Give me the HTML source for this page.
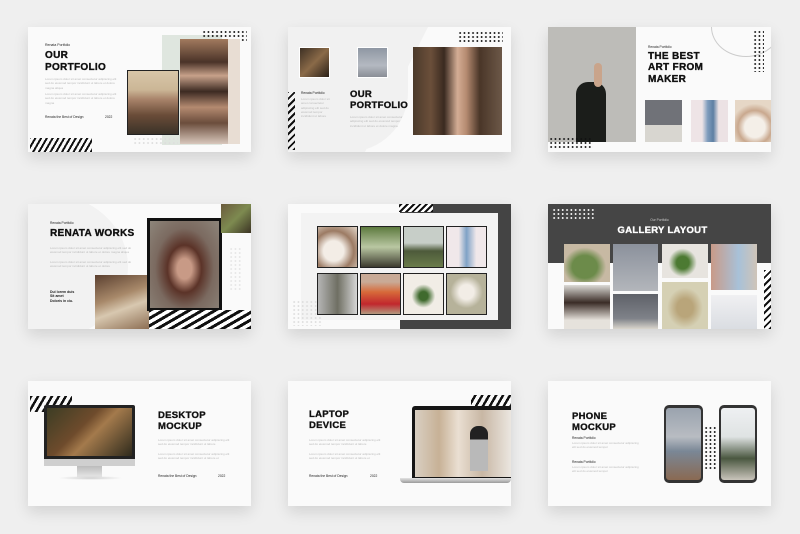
<!DOCTYPE html>
<html><head><meta charset="utf-8"><style>
*{margin:0;padding:0;box-sizing:border-box}
body{width:800px;height:534px;background:#efefef;position:relative;overflow:hidden;font-family:"Liberation Sans",sans-serif}
.s{position:absolute;width:223px;height:125px;background:#fafafa;box-shadow:0 6px 14px rgba(0,0,0,.12);overflow:hidden}
.a{position:absolute}
.t{position:absolute;font-weight:bold;color:#111;font-size:10.5px;line-height:11.5px;letter-spacing:.3px;-webkit-text-stroke:0.35px currentColor}
.sm{position:absolute;font-size:4px;color:#222;white-space:nowrap}
.lo{position:absolute;font-size:3px;line-height:4.3px;color:#bbb;width:75px;overflow:hidden}
.st{position:absolute;background:repeating-linear-gradient(-60deg,#111 0 2px,transparent 2px 5px)}
.dk{position:absolute;background-image:radial-gradient(#111 0.8px,transparent 1.1px);background-size:4.3px 4px}
.dw{position:absolute;background-image:radial-gradient(#fff 0.8px,transparent 1.1px);background-size:4.3px 4px}
.dl{position:absolute;background-image:radial-gradient(#ddd 0.8px,transparent 1.1px);background-size:4.3px 4px}
.p{position:absolute}
.bk{border:1.5px solid #222}
</style></head><body>

<!-- Slide 1 -->
<div class="s" style="left:28px;top:27px">
 <div class="sm" style="left:17px;top:16px;font-size:3.5px">Renata Portfolio</div>
 <div class="t" style="left:17px;top:23px;font-size:10px">OUR<br>PORTFOLIO</div>
 <div class="lo" style="left:17px;top:50px">Lorem ipsum dolor sit amet consectetur adipiscing elit sed do eiusmod tempor incididunt ut labore et dolore magna aliqua</div>
 <div class="lo" style="left:17px;top:65px">Lorem ipsum dolor sit amet consectetur adipiscing elit sed do eiusmod tempor incididunt ut labore et dolore magna</div>
 <div class="sm" style="left:17px;top:88px;font-size:3.3px">Renata the Best of Design</div>
 <div class="sm" style="left:77px;top:88px;font-size:3.3px">2022</div>
 <div class="a" style="left:134px;top:8px;width:60px;height:110px;background:#dfe6df"></div>
 <div class="dk" style="left:174px;top:3px;width:45px;height:13px"></div>
 <div class="p" style="left:152px;top:12px;width:60px;height:105px;background:linear-gradient(180deg,#a27a5e 0%,#4a3328 22%,#c7a18a 35%,#3c2a22 50%,#b48a70 65%,#6b4d3c 80%,#d8c7bc 100%)"></div>
 <div class="p" style="left:200px;top:12px;width:12px;height:105px;background:#e8ddd3"></div>
 <div class="p bk" style="left:99px;top:43px;width:52px;height:65px;background:linear-gradient(180deg,#d8c6a8 0%,#cbb696 30%,#a8836a 45%,#6a4c38 70%,#3a3228 100%)"></div>
 <div class="dl" style="left:105px;top:110px;width:45px;height:8px"></div>
 <div class="st" style="left:2px;top:111px;width:62px;height:14px"></div>
</div>

<!-- Slide 2 -->
<div class="s" style="left:288px;top:27px">
 <div class="a" style="left:0;top:0;width:120px;height:125px;background:#f1f1f1;border-radius:0 0 60px 0"></div>
 <div class="a" style="left:50px;top:0;width:90px;height:125px;background:#f1f1f1;clip-path:polygon(60% 0,100% 0,30% 100%,0 100%)"></div>
 <div class="dk" style="left:170px;top:4px;width:45px;height:13px"></div>
 <div class="p" style="left:11px;top:20px;width:31px;height:31px;background:linear-gradient(135deg,#3d3024,#8a6a48,#2a2018);border:1px solid #fff"></div>
 <div class="p" style="left:69px;top:20px;width:31px;height:31px;background:linear-gradient(180deg,#8f97a3,#b4b9c1 60%,#8a8e96);border:1px solid #fff"></div>
 <div class="p" style="left:125px;top:20px;width:89px;height:88px;background:linear-gradient(90deg,#4b3a2b 0%,#6b4f3a 20%,#3a2a20 35%,#d4ad95 50%,#b58a70 60%,#4a3628 75%,#6c5848 100%)"></div>
 <div class="st" style="left:0;top:65px;width:7px;height:58px;background:repeating-linear-gradient(-45deg,#111 0 2px,transparent 2px 5px)"></div>
 <div class="sm" style="left:13px;top:64px;font-size:3.3px">Renata Portfolio</div>
 <div class="lo" style="left:13px;top:70px;width:34px">Lorem ipsum dolor sit amet consectetur adipiscing elit sed do eiusmod tempor incididunt ut labore</div>
 <div class="t" style="left:62px;top:62px;font-size:9.5px;line-height:11px">OUR<br>PORTFOLIO</div>
 <div class="lo" style="left:62px;top:88px;width:55px">Lorem ipsum dolor sit amet consectetur adipiscing elit sed do eiusmod tempor incididunt ut labore et dolore magna</div>
</div>

<!-- Slide 3 -->
<div class="s" style="left:548px;top:27px">
 <div class="p" style="left:0;top:0;width:88px;height:115px;background:#bdbcb8"></div>
 <div class="p" style="left:28px;top:55px;width:30px;height:60px;background:#1b1d1a;border-radius:12px 12px 0 0"></div>
 <div class="p" style="left:46px;top:36px;width:8px;height:24px;background:#c9a48b;border-radius:4px"></div>
 <div class="dk" style="left:1px;top:110px;width:44px;height:11px"></div>
 <div class="a" style="left:163px;top:-30px;width:70px;height:60px;border:1px solid #ccc;border-radius:50%"></div>
 <div class="dk" style="left:205px;top:3px;width:11px;height:42px"></div>
 <div class="sm" style="left:100px;top:18px;font-size:3.3px">Renata Portfolio</div>
 <div class="t" style="left:100px;top:24px;font-size:10px;line-height:11.3px">THE BEST<br>ART FROM<br>MAKER</div>
 <div class="p" style="left:97px;top:73px;width:37px;height:42px;background:linear-gradient(180deg,#707278 0 60%,#d8d6d0 60%)"></div>
 <div class="p" style="left:143px;top:73px;width:37px;height:42px;background:linear-gradient(90deg,#eee4e6 30%,#7f9dbd 45%,#5d7fa3 60%,#ece2e4 75%)"></div>
 <div class="p" style="left:187px;top:73px;width:36px;height:42px;background:radial-gradient(circle at 55% 65%,#f4efe8 30%,#c9a88e 50%,#e6d7c6 70%)"></div>
</div>

<!-- Slide 4 -->
<div class="s" style="left:28px;top:204px">
 <div class="a" style="left:-60px;top:-10px;width:160px;height:145px;background:#f2f2f2;border-radius:50%"></div>
 <div class="sm" style="left:22px;top:17px;font-size:3.3px">Renata Portfolio</div>
 <div class="t" style="left:22px;top:24px;font-size:10px">RENATA WORKS</div>
 <div class="lo" style="left:22px;top:42px;width:85px">Lorem ipsum dolor sit amet consectetur adipiscing elit sed do eiusmod tempor incididunt ut labore et dolore magna aliqua</div>
 <div class="lo" style="left:22px;top:56px;width:85px">Lorem ipsum dolor sit amet consectetur adipiscing elit sed do eiusmod tempor incididunt ut labore et dolore</div>
 <div class="sm" style="left:22px;top:86px;font-size:3.5px;line-height:4.3px;font-weight:bold">Dui lorem duis<br>Sit amet<br>Doloris in ciu.</div>
 <div class="p" style="left:67px;top:71px;width:55px;height:54px;background:linear-gradient(160deg,#5b4030,#a8896a 40%,#d8c8b0 60%,#8c6d52)"></div>
 <div class="p" style="left:119px;top:14px;width:75px;height:93px;background:#111"></div>
 <div class="p" style="left:122px;top:17px;width:69px;height:87px;background:radial-gradient(ellipse at 50% 55%,#c89a86 15%,#5b3328 35%,#7b6a60 60%,#8d857a)"></div>
 <div class="p" style="left:193px;top:0;width:30px;height:29px;background:linear-gradient(135deg,#6a5a3c,#7d8a50,#3c3424)"></div>
 <div class="dw" style="left:201px;top:43px;width:14px;height:45px;background-image:radial-gradient(#e6e6e6 0.8px,transparent 1.1px)"></div>
 <div class="a" style="left:121px;top:106px;width:102px;height:19px;background:repeating-linear-gradient(-30deg,#111 0 3px,#fff 3px 6.5px)"></div>
</div>

<!-- Slide 5 -->
<div class="s" style="left:288px;top:204px">
 <div class="a" style="left:112px;top:0;width:111px;height:125px;background:#444"></div>
 <div class="a" style="left:13px;top:9px;width:197px;height:107px;background:#f3f3f3"></div>
 <div class="a" style="left:0;top:116px;width:112px;height:9px;background:#fafafa"></div>
 <div class="st" style="left:111px;top:0;width:34px;height:8px;background:repeating-linear-gradient(-45deg,#111 0 2px,#fff 2px 4.5px)"></div>
 <div class="dl" style="left:4px;top:96px;width:30px;height:26px"></div>
 <div class="p bk" style="left:29px;top:22px;width:41px;height:42px;background:radial-gradient(circle at 40% 60%,#f3ede6 30%,#9c7b64 60%,#e2d6c9)"></div>
 <div class="p bk" style="left:72px;top:22px;width:41px;height:42px;background:linear-gradient(180deg,#5d7a3e,#b9c7a2 50%,#3c3a2e)"></div>
 <div class="p bk" style="left:115px;top:22px;width:41px;height:42px;background:linear-gradient(180deg,#c7cec8 40%,#4d5a3a 60%,#6a7c4a)"></div>
 <div class="p bk" style="left:158px;top:22px;width:41px;height:42px;background:linear-gradient(90deg,#f0e8ea 30%,#7fa2c6 50%,#f0e8ea 75%)"></div>
 <div class="p bk" style="left:29px;top:69px;width:41px;height:42px;background:linear-gradient(90deg,#b5b5b5,#6f6f63 50%,#d6d6d6)"></div>
 <div class="p bk" style="left:72px;top:69px;width:41px;height:42px;background:linear-gradient(180deg,#c9aa96 20%,#d76a3a 45%,#c1272d 75%,#b2997f)"></div>
 <div class="p bk" style="left:115px;top:69px;width:41px;height:42px;background:radial-gradient(circle at 50% 55%,#3f6a2e 15%,#f1ede6 40%)"></div>
 <div class="p bk" style="left:158px;top:69px;width:41px;height:42px;background:radial-gradient(circle at 50% 45%,#f2ede6 25%,#b6b29a 55%)"></div>
</div>

<!-- Slide 6 -->
<div class="s" style="left:548px;top:204px">
 <div class="a" style="left:0;top:0;width:223px;height:59px;background:#454545"></div>
 <div class="dw" style="left:4px;top:4px;width:44px;height:13px"></div>
 <div class="sm" style="left:0;width:223px;text-align:center;top:14px;font-size:3.3px;color:#ccc">Our Portfolio</div>
 <div class="t" style="left:0;width:229px;text-align:center;top:21px;color:#fff;font-size:9.5px">GALLERY LAYOUT</div>
 <div class="p" style="left:16px;top:40px;width:46px;height:38px;background:radial-gradient(ellipse at 45% 60%,#6c8b4a 35%,#c7b9a3 60%)"></div>
 <div class="p" style="left:16px;top:81px;width:46px;height:44px;background:linear-gradient(180deg,#dcdad6,#3a2c26 40%,#e6e2dc 80%)"></div>
 <div class="p" style="left:65px;top:40px;width:45px;height:47px;background:linear-gradient(180deg,#8b919c,#b3b6bb)"></div>
 <div class="p" style="left:65px;top:90px;width:45px;height:35px;background:linear-gradient(180deg,#5e6168,#7f8289 70%,#d9d5cc)"></div>
 <div class="p" style="left:114px;top:40px;width:46px;height:34px;background:radial-gradient(circle at 45% 55%,#4c7a32 20%,#e7e4df 45%)"></div>
 <div class="p" style="left:114px;top:78px;width:46px;height:47px;background:radial-gradient(ellipse at 50% 55%,#b9a57a 25%,#d5d0b4 55%)"></div>
 <div class="p" style="left:163px;top:40px;width:46px;height:46px;background:linear-gradient(90deg,#c99a88,#a8c1d8 60%,#cfc4b8)"></div>
 <div class="p" style="left:163px;top:91px;width:46px;height:34px;background:linear-gradient(180deg,#f0f0f2,#dadde2)"></div>
 <div class="st" style="left:216px;top:66px;width:7px;height:59px;background:repeating-linear-gradient(-45deg,#111 0 2px,#fff 2px 5px)"></div>
</div>

<!-- Slide 7 -->
<div class="s" style="left:28px;top:381px">
 <div class="st" style="left:2px;top:15px;width:42px;height:16px;background:repeating-linear-gradient(-60deg,#111 0 2.5px,transparent 2.5px 6px)"></div>
 <div class="a" style="left:16px;top:24px;width:91px;height:57px;background:#222;border-radius:2px"></div>
 <div class="a" style="left:19px;top:27px;width:85px;height:48px;background:linear-gradient(135deg,#3c3d24,#6e4b2c 40%,#a47a4c 55%,#2e2a1c)"></div>
 <div class="a" style="left:16px;top:78px;width:91px;height:7px;background:#cfcfcf"></div>
 <div class="a" style="left:49px;top:85px;width:25px;height:11px;background:linear-gradient(#bbb,#e6e6e6)"></div>
 <div class="a" style="left:30px;top:95px;width:65px;height:4px;background:radial-gradient(ellipse,#ccc,transparent 70%)"></div>
 <div class="t" style="left:130px;top:29px;font-size:9.5px;line-height:11px">DESKTOP<br>MOCKUP</div>
 <div class="lo" style="left:130px;top:57px;width:75px">Lorem ipsum dolor sit amet consectetur adipiscing elit sed do eiusmod tempor incididunt ut labore</div>
 <div class="lo" style="left:130px;top:71px;width:75px">Lorem ipsum dolor sit amet consectetur adipiscing elit sed do eiusmod tempor incididunt ut labore et</div>
 <div class="sm" style="left:130px;top:93px;font-size:3.3px">Renata the Best of Design</div>
 <div class="sm" style="left:190px;top:93px;font-size:3.3px">2022</div>
</div>

<!-- Slide 8 -->
<div class="s" style="left:288px;top:381px">
 <div class="t" style="left:21px;top:28px;font-size:9.5px;line-height:11px">LAPTOP<br>DEVICE</div>
 <div class="lo" style="left:21px;top:57px;width:75px">Lorem ipsum dolor sit amet consectetur adipiscing elit sed do eiusmod tempor incididunt ut labore</div>
 <div class="lo" style="left:21px;top:71px;width:75px">Lorem ipsum dolor sit amet consectetur adipiscing elit sed do eiusmod tempor incididunt ut labore et</div>
 <div class="sm" style="left:21px;top:93px;font-size:3.3px">Renata the Best of Design</div>
 <div class="sm" style="left:82px;top:93px;font-size:3.3px">2022</div>
 <div class="st" style="left:183px;top:14px;width:40px;height:13px;background:repeating-linear-gradient(-60deg,#111 0 2.5px,transparent 2.5px 6px)"></div>
 <div class="a" style="left:124px;top:25px;width:99px;height:72px;background:#151515;border-radius:3px 0 0 0"></div>
 <div class="a" style="left:127px;top:29px;width:96px;height:67px;background:linear-gradient(90deg,#d9cfc2,#c7b196 25%,#eadfd2 45%,#c8b7a4 70%,#ebe6e0)"></div>
 <div class="a" style="left:182px;top:45px;width:18px;height:45px;background:linear-gradient(#222 30%,#b9b9b9 30%);border-radius:8px 8px 0 0"></div>
 <div class="a" style="left:112px;top:97px;width:111px;height:5px;background:linear-gradient(#e3e3e3,#9a9a9a);border-radius:0 0 4px 4px"></div>
</div>

<!-- Slide 9 -->
<div class="s" style="left:548px;top:381px">
 <div class="t" style="left:24px;top:30px;font-size:9.5px;line-height:11px">PHONE<br>MOCKUP</div>
 <div class="sm" style="left:24px;top:55px;font-size:3.3px">Renata Portfolio</div>
 <div class="lo" style="left:24px;top:60px;width:70px">Lorem ipsum dolor sit amet consectetur adipiscing elit sed do eiusmod tempor</div>
 <div class="sm" style="left:24px;top:79px;font-size:3.3px">Renata Portfolio</div>
 <div class="lo" style="left:24px;top:84px;width:70px">Lorem ipsum dolor sit amet consectetur adipiscing elit sed do eiusmod tempor</div>
 <div class="dk" style="left:156px;top:45px;width:13px;height:44px"></div>
 <div class="a" style="left:116px;top:24px;width:39px;height:78px;background:#333;border-radius:5px"></div>
 <div class="a" style="left:118px;top:27px;width:35px;height:72px;background:linear-gradient(180deg,#9aa3ae,#b8bcc2 40%,#7a8796 60%,#8a6a52);border-radius:3px"></div>
 <div class="a" style="left:171px;top:24px;width:38px;height:78px;background:#333;border-radius:5px"></div>
 <div class="a" style="left:173px;top:27px;width:34px;height:72px;background:linear-gradient(180deg,#eef0f2,#dfe3e3 40%,#4a5740 70%,#c9c4bb);border-radius:3px"></div>
</div>

</body></html>
